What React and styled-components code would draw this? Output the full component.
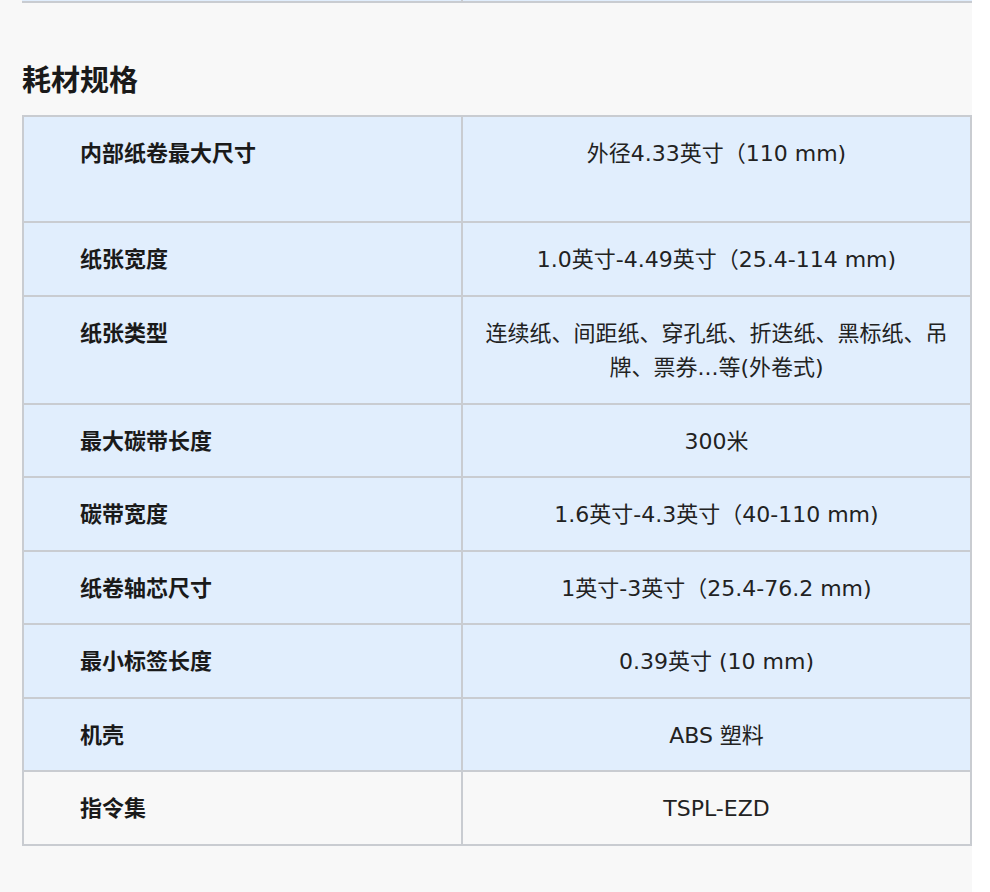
import React from "react";
import styled, { createGlobalStyle } from "styled-components";

const GlobalStyle = createGlobalStyle`
  html, body {
    margin: 0;
    padding: 0;
    background: #ffffff;
  }
  body {
    font-family: "DejaVu Sans", "Noto Sans CJK SC", sans-serif;
    color: #1c1c1c;
  }
`;

const specs = [
  { label: "内部纸卷最大尺寸", value: "外径4.33英寸（110 mm)", tall: true },
  { label: "纸张宽度", value: "1.0英寸-4.49英寸（25.4-114 mm)" },
  { label: "纸张类型", value: "连续纸、间距纸、穿孔纸、折迭纸、黑标纸、吊牌、票券...等(外卷式)" },
  { label: "最大碳带长度", value: "300米" },
  { label: "碳带宽度", value: "1.6英寸-4.3英寸（40-110 mm)" },
  { label: "纸卷轴芯尺寸", value: "1英寸-3英寸（25.4-76.2 mm)" },
  { label: "最小标签长度", value: "0.39英寸 (10 mm)" },
  { label: "机壳", value: "ABS 塑料" },
  { label: "指令集", value: "TSPL-EZD", plain: true },
];

const Page = styled.div`
  width: 972px;
  height: 892px;
  background: #f8f8f8;
  box-sizing: border-box;
  padding-left: 22px;
  overflow: hidden;
`;

const PrevEdge = styled.div`
  display: grid;
  grid-template-columns: 439px 1fr;
  height: 3px;
  border-bottom: 2px solid #c9ccd1;
  margin-top: -2px;
  background: #e1eefd;
`;

const PrevCell = styled.div`
  border-left: ${(p) => (p.divider ? "2px solid #c9ccd1" : "none")};
`;

const Heading = styled.h2`
  margin: 0;
  padding-top: 55px;
  height: 57px;
  font-family: "Noto Sans CJK SC", sans-serif;
  font-size: 29px;
  line-height: 40px;
  font-weight: 700;
  color: #1a1a1a;
`;

const Table = styled.table`
  width: 950px;
  border-collapse: collapse;
  table-layout: fixed;
  border: 2px solid #c9ccd1;
`;

const Row = styled.tr`
  background: ${(p) => (p.plain ? "#f8f8f8" : "#e1eefd")};
`;

const Label = styled.td`
  width: 381px;
  border: 2px solid #c9ccd1;
  vertical-align: top;
  padding: ${(p) => (p.tall ? "17px 0 52.5px" : "17px 0 20px")} 56px;
  font-family: "Noto Sans CJK SC", sans-serif;
  font-size: 22px;
  line-height: 34.5px;
  font-weight: 700;
  color: #1a1a1a;
`;

const Value = styled.td`
  border: 2px solid #c9ccd1;
  vertical-align: top;
  text-align: center;
  padding: 20px 20px 17px;
  font-size: 22px;
  line-height: 34.5px;
  color: #222222;
`;

export default function App() {
  return (
    <>
      <GlobalStyle />
      <Page>
        <PrevEdge>
          <PrevCell />
          <PrevCell divider />
        </PrevEdge>
        <Heading>耗材规格</Heading>
        <Table>
          <tbody>
            {specs.map((s) => (
              <Row key={s.label} plain={s.plain}>
                <Label tall={s.tall}>{s.label}</Label>
                <Value>{s.value}</Value>
              </Row>
            ))}
          </tbody>
        </Table>
      </Page>
    </>
  );
}
